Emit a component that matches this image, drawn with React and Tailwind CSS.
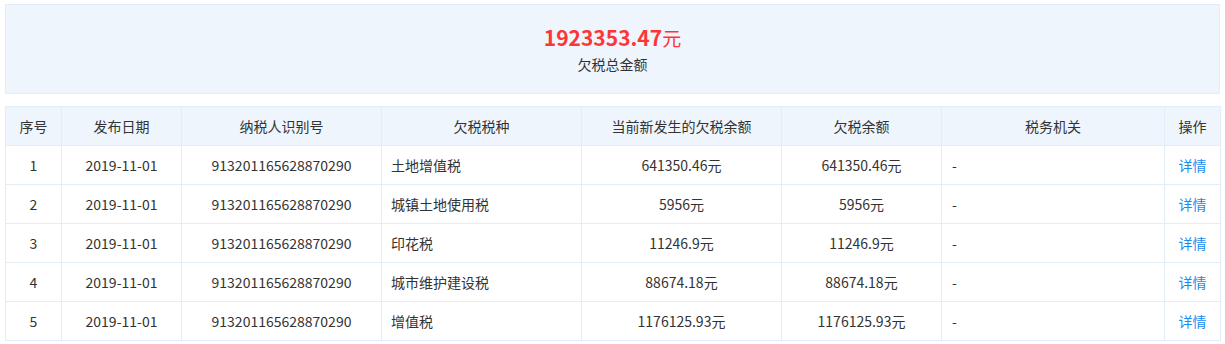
const rows = [
  { id: 1, date: "2019-11-01", code: "913201165628870290", type: "土地增值税", cur: "641350.46元", total: "641350.46元" },
  { id: 2, date: "2019-11-01", code: "913201165628870290", type: "城镇土地使用税", cur: "5956元", total: "5956元" },
  { id: 3, date: "2019-11-01", code: "913201165628870290", type: "印花税", cur: "11246.9元", total: "11246.9元" },
  { id: 4, date: "2019-11-01", code: "913201165628870290", type: "城市维护建设税", cur: "88674.18元", total: "88674.18元" },
  { id: 5, date: "2019-11-01", code: "913201165628870290", type: "增值税", cur: "1176125.93元", total: "1176125.93元" },
];

const headers = ["序号", "发布日期", "纳税人识别号", "欠税税种", "当前新发生的欠税余额", "欠税余额", "税务机关", "操作"];
const widths = ["w-[56px]", "w-[120px]", "w-[200px]", "w-[200px]", "w-[200px]", "w-[160px]", "w-[223px]", "w-[56px]"];

function App() {
  return (
    <div
      className="min-h-screen bg-white px-[5px] pt-[4px] text-[14px] text-[#333]"
      style={{ fontFamily: '"Microsoft YaHei", "Noto Sans CJK SC", sans-serif' }}
    >
      {/* summary */}
      <div className="h-[90px] border border-[#e3edf8] bg-[#eef5fd] flex flex-col items-center pt-[19px]">
        <div className="text-[21px] leading-[26px] font-bold text-[#ff3535]">
          1923353.47<span className="font-normal text-[19px]">元</span>
        </div>
        <div className="mt-[3px] leading-[20px]">欠税总金额</div>
      </div>

      {/* table */}
      <table className="mt-[12px] w-[1216px] table-fixed border-collapse">
        <colgroup>
          {widths.map((w, i) => (
            <col key={i} className={w} />
          ))}
        </colgroup>
        <thead>
          <tr className="h-[39px] bg-[#eef5fd]">
            {headers.map((h) => (
              <th key={h} className="border border-[#e3edf8] font-normal text-center px-0">
                {h}
              </th>
            ))}
          </tr>
        </thead>
        <tbody>
          {rows.map((r) => (
            <tr key={r.id} className="h-[39px]">
              <td className="border border-[#e3edf8] text-center">{r.id}</td>
              <td className="border border-[#e3edf8] text-center">{r.date}</td>
              <td className="border border-[#e3edf8] text-center">{r.code}</td>
              <td className="border border-[#e3edf8] pl-[9px]">{r.type}</td>
              <td className="border border-[#e3edf8] text-center">{r.cur}</td>
              <td className="border border-[#e3edf8] text-center">{r.total}</td>
              <td className="border border-[#e3edf8] pl-[10px]">-</td>
              <td className="border border-[#e3edf8] text-center text-[#1a8cf0]">详情</td>
            </tr>
          ))}
        </tbody>
      </table>
    </div>
  );
}

export default App;
